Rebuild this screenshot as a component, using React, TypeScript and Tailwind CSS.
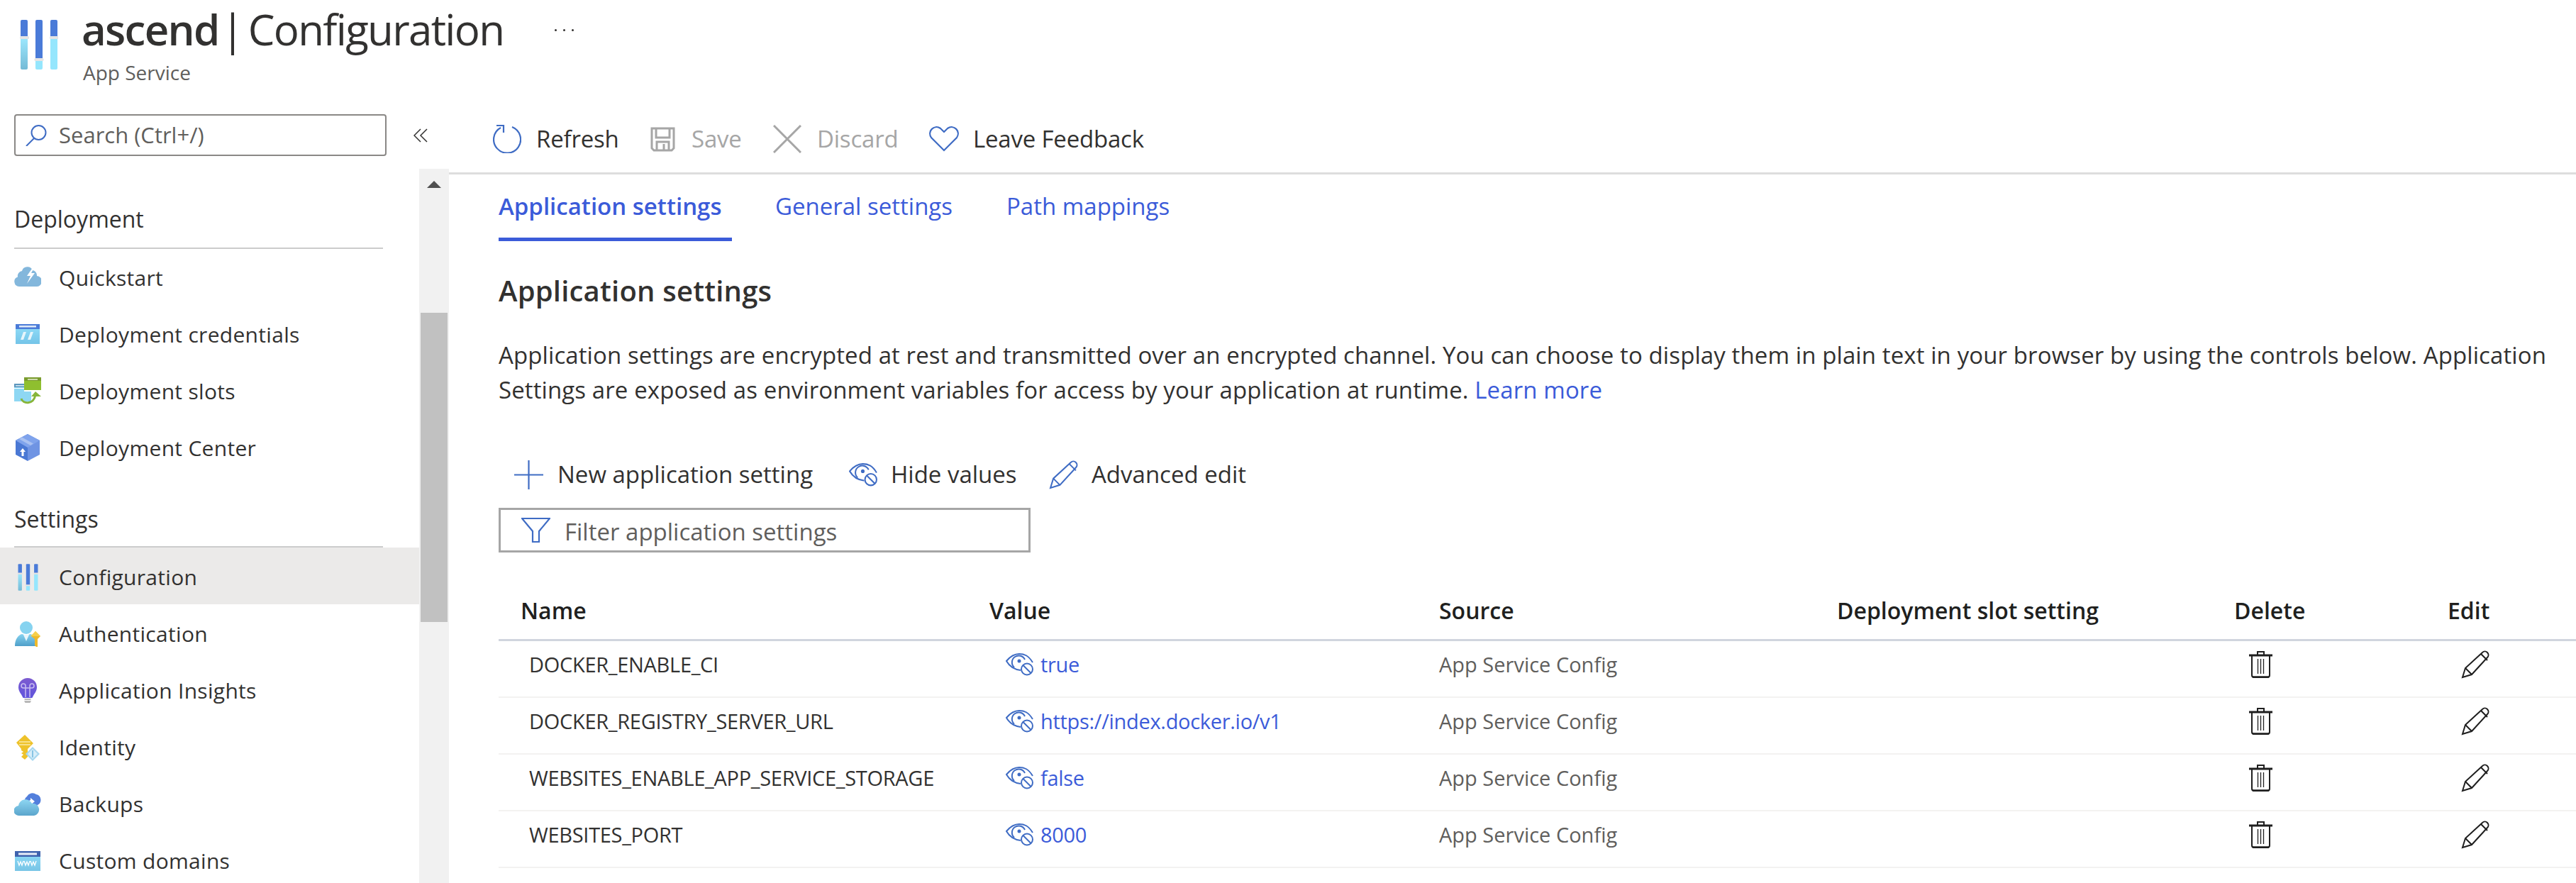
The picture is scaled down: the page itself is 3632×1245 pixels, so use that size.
import type { ReactNode } from 'react'

const ConfigIcon = ({ className }: { className: string }) => (
  <svg viewBox="0 0 54 70" className={className}>
    <defs>
      <linearGradient id="cfgLight" x1="0" y1="0" x2="0" y2="1">
        <stop offset="0" stopColor="#9be6fc" />
        <stop offset="1" stopColor="#74bad6" />
      </linearGradient>
    </defs>
    <path d="M1 2a2 2 0 0 1 2-2h6a2 2 0 0 1 2 2v24H1z" fill="#4a7bd8" />
    <path d="M1 27h10v41a2 2 0 0 1-2 2H3a2 2 0 0 1-2-2z" fill="url(#cfgLight)" />
    <path d="M22 2a2 2 0 0 1 2-2h6a2 2 0 0 1 2 2v56H22z" fill="#4a7bd8" />
    <path d="M22 58h10v10a2 2 0 0 1-2 2h-6a2 2 0 0 1-2-2z" fill="#95e6fd" />
    <path d="M43 2a2 2 0 0 1 2-2h6a2 2 0 0 1 2 2v24H43z" fill="#4a7bd8" />
    <path d="M43 27h10v41a2 2 0 0 1-2 2h-6a2 2 0 0 1-2-2z" fill="#95e6fd" />
    <rect x="0" y="23" width="13" height="4" rx="1.5" fill="#e4e4e4" />
    <rect x="20.5" y="54" width="13" height="4" rx="1.5" fill="#e4e4e4" />
    <rect x="42" y="23" width="13" height="4" rx="1.5" fill="#e4e4e4" />
  </svg>
)

const Quickstart = () => (
  <svg viewBox="0 0 38 38" className="w-[38px] h-[38px]">
    <path d="M7 32a7 7 0 0 1-2-13.600A7 7 0 0 1 11 10a8 8 0 0 1 15-1 8 8 0 0 1 6 8 7.500 7.500 0 0 1-1 15z" fill="#83b7dc" />
    <path d="M27 4l-9 13h5l-5 11 11-15h-5l5-9z" fill="#fff" />
  </svg>
)

const Credentials = () => (
  <svg viewBox="0 0 38 38" className="w-[38px] h-[38px]">
    <defs>
      <linearGradient id="credBody" x1="0" y1="0" x2="0" y2="1">
        <stop offset="0" stopColor="#93dffa" />
        <stop offset="1" stopColor="#74c4e8" />
      </linearGradient>
    </defs>
    <rect x="2" y="5" width="34" height="28" fill="url(#credBody)" />
    <rect x="2" y="5" width="34" height="7" fill="#4a7bd8" />
    <rect x="7" y="7" width="24" height="2.500" fill="#dfe9f7" />
    <path d="M13 16h4l-4 11H9zM23 16h4l-4 11h-4z" fill="#e6f5fb" />
  </svg>
)

const Slots = () => (
  <svg viewBox="0 0 38 38" className="w-[38px] h-[38px]">
    <rect x="0" y="9" width="24" height="25" fill="#8ed7f3" />
    <rect x="0" y="9" width="24" height="5" fill="#5b96bd" />
    <rect x="2" y="11" width="12" height="1.500" fill="#d4e7f2" />
    <rect x="14" y="0" width="24" height="18" fill="#8fbf2f" />
    <rect x="14" y="0" width="24" height="5" fill="#7a9c2e" />
    <rect x="19" y="2" width="14" height="2" fill="#cfdcae" />
    <rect x="0" y="15" width="14" height="1" fill="#fff" />
    <path d="M10 30c2 8 17 9 20-5" fill="none" stroke="#86b53a" strokeWidth="3" />
    <path d="M24 27l6-7 8 7z" fill="#86b53a" />
    <rect x="14" y="18" width="24" height="2" fill="#fff" />
  </svg>
)

const Cube = () => (
  <svg viewBox="0 0 38 38" className="w-[38px] h-[38px]">
    <path d="M19 0L36 9v20L19 38z" fill="#6f94e3" />
    <path d="M19 0L2 9v20l17 9z" fill="#4a78d4" />
    <path d="M19 0l17 9-17 10L2 9z" fill="#7fa3ec" />
    <path d="M11 4.500l16 9-4 2.500-16-9z" fill="#a9c1f1" />
    <path d="M12 20l-4 5h2.500v6h3v-6H16z" fill="#fff" />
  </svg>
)

const Auth = () => (
  <svg viewBox="0 0 38 38" className="w-[38px] h-[38px]">
    <defs>
      <linearGradient id="authBody" x1="0" y1="0" x2="0" y2="1">
        <stop offset="0" stopColor="#86d3f0" />
        <stop offset="1" stopColor="#4f9fc9" />
      </linearGradient>
    </defs>
    <circle cx="17" cy="10" r="9" fill="#86d3f0" />
    <path d="M1 36c0-10 5-16 10-17l6 2 6-2c3 1 6 4 7 8v9z" fill="url(#authBody)" />
    <path d="M13 20h8l-4 9z" fill="#eaf6fb" />
    <path d="M30 15l7 7-4 4v11h-2l-2-2v-9l-5-4z" fill="#efb92a" />
    <path d="M30 15l7 7-14 0z" fill="#f7cf4a" />
  </svg>
)

const Insights = () => (
  <svg viewBox="0 0 38 38" className="w-[38px] h-[38px]">
    <defs>
      <linearGradient id="bulb" x1="0" y1="0" x2="0" y2="1">
        <stop offset="0" stopColor="#7d5bd0" />
        <stop offset="1" stopColor="#5f54dc" />
      </linearGradient>
    </defs>
    <path d="M19 1a13 13 0 0 1 13 13c0 6-4 9-6 14-.400 1-1 1-2 1H14c-1 0-1.600 0-2-1-2-5-6-8-6-14A13 13 0 0 1 19 1z" fill="url(#bulb)" />
    <path d="M16 28V12a3 3 0 1 0-3 3h12a3 3 0 1 0-3-3v16" fill="none" stroke="#c9bdf0" strokeWidth="1.500" />
    <path d="M14 30h10l-1 2H15zM14 33h10l-1.500 3h-7z" fill="#b8b8b8" />
  </svg>
)

const Identity = () => (
  <svg viewBox="0 0 38 38" className="w-[38px] h-[38px]">
    <path d="M15 1l12 12-8 8v11l-4 4-5-4 3-3-3-2 3-2-3-2v-2l-7-9z" fill="#eec22a" />
    <path d="M7 10h16v2H7zM7 14h16v2H7z" fill="#f7e089" />
    <path d="M26 18l10 10-10 10-10-10z" fill="#a7d7ef" />
    <path d="M26 21l7 7-7 7-7-7z" fill="#d8eef9" />
    <path d="M26 23v10" stroke="#6cb6dd" strokeWidth="1.500" />
  </svg>
)

const Backups = () => (
  <svg viewBox="0 0 38 38" className="w-[38px] h-[38px]">
    <defs>
      <linearGradient id="backFront" x1="0" y1="0" x2="0" y2="1">
        <stop offset="0" stopColor="#8ed6f2" />
        <stop offset="1" stopColor="#5ba5cc" />
      </linearGradient>
    </defs>
    <path d="M16 18a7 7 0 0 1 2-10 9 9 0 0 1 13-3 8 8 0 0 1 2 15 4 4 0 0 1-3 2H18z" fill="#527fdc" />
    <path d="M17 16l6-3v-3l6 5-6 5v-3l-4 1z" fill="#fff" />
    <path d="M7 35a7 7 0 0 1-1-14 10 10 0 0 1 19-3 8.500 8.500 0 0 1 3 17z" fill="url(#backFront)" />
  </svg>
)

const Domains = () => (
  <svg viewBox="0 0 38 38" className="w-[38px] h-[38px]">
    <defs>
      <linearGradient id="wwwBody" x1="0" y1="0" x2="0" y2="1">
        <stop offset="0" stopColor="#8edcf8" />
        <stop offset="1" stopColor="#78c5e6" />
      </linearGradient>
    </defs>
    <rect x="1" y="5" width="36" height="28" fill="url(#wwwBody)" />
    <rect x="1" y="5" width="36" height="8" fill="#3f63ae" />
    <rect x="6" y="7.500" width="26" height="3" fill="#e8eef8" />
    <path d="M5 19l2 6 2-5 2 5 2-6M14 19l2 6 2-5 2 5 2-6M23 19l2 6 2-5 2 5 2-6" fill="none" stroke="#fff" strokeWidth="1.300" />
  </svg>
)

const EyeOff = ({ className }: { className: string }) => (
  <svg viewBox="0 0 40 32" fill="none" stroke="#3f6cc4" strokeWidth="2" className={className}>
    <path d="M38 13C32 3 26 1 19 1 12 1 6 5 1 11c4 7 11 12 20 13" />
    <path d="M12 20a9.500 9.500 0 1 1 15-11" />
    <circle cx="19" cy="11" r="2.500" fill="#3f6cc4" stroke="none" />
    <circle cx="30" cy="22.500" r="8" />
    <path d="M24.500 17l11 11" />
  </svg>
)

const Pencil = ({ color, className }: { color: string; className: string }) => (
  <svg viewBox="0 0 40 40" fill="none" stroke={color} strokeWidth="2" className={className}>
    <path d="M2 38l4-13L30 3c2-2 5-2 7 0s2 5 0 7L15 34z" />
    <path d="M6 25l9 9M28 5l9 9" />
  </svg>
)

const Trash = () => (
  <svg viewBox="0 0 33 38" fill="none" stroke="#1f1f1f" className="w-[33px] h-[38px]">
    <path d="M12 5V1h9v4" strokeWidth="2" />
    <path d="M0 6h33" strokeWidth="3" />
    <path d="M4 6v28c0 2 1 3 3 3h19c2 0 3-1 3-3V6" strokeWidth="2" />
    <path d="M5 36.500h23" strokeWidth="2.500" />
    <path d="M12.500 11v21M16.500 11v21M20.500 11v21" strokeWidth="1.300" />
  </svg>
)

type MenuItem = { label: string; icon: ReactNode; active?: boolean }

const deployment: MenuItem[] = [
  { label: 'Quickstart', icon: <Quickstart /> },
  { label: 'Deployment credentials', icon: <Credentials /> },
  { label: 'Deployment slots', icon: <Slots /> },
  { label: 'Deployment Center', icon: <Cube /> },
]

const settings: MenuItem[] = [
  { label: 'Configuration', icon: <ConfigIcon className="w-[29px] h-[38px]" />, active: true },
  { label: 'Authentication', icon: <Auth /> },
  { label: 'Application Insights', icon: <Insights /> },
  { label: 'Identity', icon: <Identity /> },
  { label: 'Backups', icon: <Backups /> },
  { label: 'Custom domains', icon: <Domains /> },
]

const rows = [
  { name: 'DOCKER_ENABLE_CI', value: 'true' },
  { name: 'DOCKER_REGISTRY_SERVER_URL', value: 'https://index.docker.io/v1' },
  { name: 'WEBSITES_ENABLE_APP_SERVICE_STORAGE', value: 'false' },
  { name: 'WEBSITES_PORT', value: '8000' },
]

function MenuRow({ item, className = '' }: { item: MenuItem; className?: string }) {
  return (
    <div className={`h-[80px] flex items-center shrink-0 ${className} ${item.active ? 'bg-[#ebeae9]' : ''}`}>
      <div className="w-[83px] pl-[20px] shrink-0 flex">
        <div className="w-[38px] flex justify-center">{item.icon}</div>
      </div>
      <span className="text-[30px] tracking-[0.3px] text-[#323130]">{item.label}</span>
    </div>
  )
}

function MenuHeading({ label, pad }: { label: string; pad: string }) {
  return (
    <div className="h-[101px] shrink-0 flex flex-col justify-end">
      <div className={`mx-[20px] w-[520px] border-b-2 border-[#cccccc] ${pad} text-[32px] leading-[40px] font-medium text-[#323130]`}>
        {label}
      </div>
    </div>
  )
}

function ToolButton({ icon, label, muted, className }: { icon: ReactNode; label: string; muted?: boolean; className: string }) {
  return (
    <div className={`flex items-center ${className}`}>
      {icon}
      <span className={`text-[33px] tracking-[-0.2px] ${muted ? 'text-[#a6a6a6]' : 'text-[#323130]'}`}>{label}</span>
    </div>
  )
}

export default function App() {
  return (
    <div className="w-full h-[1245px] overflow-hidden bg-white font-['Open_Sans','Segoe_UI',sans-serif] flex flex-col">
      {/* header */}
      <div className="h-[161px] shrink-0 flex items-start pl-[28px] pt-[28px]">
        <ConfigIcon className="w-[54px] h-[70px] shrink-0" />
        <div className="ml-[35px] -mt-[28px]">
          <div className="-ml-[2px] text-[60px] leading-[82px] tracking-[-1.7px] text-[#323130] whitespace-nowrap">
            <span className="font-semibold">ascend</span> <span className="-ml-[11px] -mr-[7px]">|</span> Configuration
          </div>
          <div className="mt-[2px] text-[28px] leading-[36px] text-[#605e5c]">App Service</div>
        </div>
        <div className="ml-[72px] mt-[13px] flex gap-[9px]">
          <div className="w-[3px] h-[3px] bg-[#323130] rounded-full" />
          <div className="w-[3px] h-[3px] bg-[#323130] rounded-full" />
          <div className="w-[3px] h-[3px] bg-[#323130] rounded-full" />
        </div>
      </div>

      <div className="flex-1 min-h-0 flex">
        {/* left blade menu */}
        <div className="w-[633px] shrink-0 flex flex-col">
          <div className="h-[77px] shrink-0 flex items-start pl-[20px]">
            <div className="w-[525px] h-[59px] border-2 border-[#8a8886] rounded-[4px] flex items-center pl-[14px]">
              <svg viewBox="0 0 30 30" fill="none" stroke="#3f6cc4" strokeWidth="2" className="w-[30px] h-[30px] shrink-0">
                <circle cx="18.500" cy="11" r="10" />
                <path d="M12 19L1 30" />
              </svg>
              <span className="ml-[17px] text-[31px] text-[#605e5c]">Search (Ctrl+/)</span>
            </div>
            <svg viewBox="0 0 20 20" fill="none" stroke="#323130" strokeWidth="1.500" className="w-[20px] h-[20px] ml-[38px] mt-[20px]">
              <path d="M10 1L1 10l9 9M19 1l-9 9 9 9" />
            </svg>
          </div>
          <div className="flex-1 min-h-0 flex">
            <div className="w-[591px] shrink-0 pt-[12px] flex flex-col overflow-hidden">
              <MenuHeading label="Deployment" pad="pb-[20px]" />
              {deployment.map(item => <MenuRow key={item.label} item={item} />)}
              <MenuHeading label="Settings" pad="pb-[18px]" />
              {settings.map(item => <MenuRow key={item.label} item={item} className="pt-[3px]" />)}
            </div>
            <div className="w-[42px] shrink-0 bg-[#f1f1f1] flex flex-col items-center">
              <svg viewBox="0 0 20 10" className="w-[20px] h-[10px] mt-[17px] shrink-0">
                <path d="M10 0l10 10H0z" fill="#505050" />
              </svg>
              <div className="w-[38px] h-[436px] mt-[176px] bg-[#c1c1c1] shrink-0" />
            </div>
          </div>
        </div>

        {/* main */}
        <div className="flex-1 min-w-0 flex flex-col">
          <div className="h-[85px] shrink-0 border-b-[3px] border-[#dddddd] flex items-center pl-[62px] pb-[12px]">
            <ToolButton
              className="w-[222px]"
              label="Refresh"
              icon={
                <svg viewBox="0 0 40 40" fill="none" stroke="#3f6cc4" strokeWidth="2.200" className="w-[40px] h-[40px] mr-[21px]">
                  <path d="M27 3a19 19 0 1 1-16 1" />
                  <path d="M5 1h10v10" />
                </svg>
              }
            />
            <ToolButton
              className="w-[173px]"
              label="Save"
              muted
              icon={
                <svg viewBox="0 0 35 35" fill="none" stroke="#a6a6a6" strokeWidth="3" className="w-[35px] h-[35px] mr-[23px]">
                  <path d="M2 2h31v28l-3 3H5l-3-3z" />
                  <path d="M8 2v13h19V2M9 33V21h17v12M19 24v9" />
                </svg>
              }
            />
            <ToolButton
              className="w-[220px]"
              label="Discard"
              muted
              icon={
                <svg viewBox="0 0 40 40" fill="none" stroke="#a6a6a6" strokeWidth="3" className="w-[40px] h-[40px] mr-[22px]">
                  <path d="M1 1l38 38M39 1L1 39" />
                </svg>
              }
            />
            <ToolButton
              className="w-[310px]"
              label="Leave Feedback"
              icon={
                <svg viewBox="0 0 42 36" fill="none" stroke="#3f6cc4" strokeWidth="2.200" className="w-[42px] h-[36px] mr-[20px]">
                  <path d="M21 34L3 16C-3 7 7-3 16 3l5 5 5-5c9-6 19 4 13 13z" />
                </svg>
              }
            />
          </div>

          <div className="flex-1 min-h-0 pl-[70px]">
            {/* tabs */}
            <div className="h-[94px] flex items-stretch text-[33px] text-[#3b5bd9]">
              <div className="w-[329px] pt-[24px] border-b-[5px] border-[#3b5bd9] font-semibold leading-[42px] whitespace-nowrap">Application settings</div>
              <div className="ml-[61px] w-[248px] pt-[24px] leading-[42px] whitespace-nowrap">General settings</div>
              <div className="ml-[78px] pt-[24px] leading-[42px]">Path mappings</div>
            </div>

            <h2 className="mt-[46px] text-[40px] leading-[48px] tracking-[0.2px] font-semibold text-[#323130]">Application settings</h2>
            <p className="mt-[42px] text-[33px] leading-[49px] tracking-[0.1px] text-[#323130] pr-[40px]">
              Application settings are encrypted at rest and transmitted over an encrypted channel. You can choose to display them in plain text in your browser by using the controls below. Application Settings are exposed as environment variables for access by your application at runtime.{' '}
              <span className="text-[#3b5bd9]">Learn more</span>
            </p>

            {/* commands */}
            <div className="mt-[73px] h-[44px] flex items-center text-[33px] text-[#323130]">
              <svg viewBox="0 0 41 41" stroke="#3f6cc4" strokeWidth="2.200" className="w-[41px] h-[41px] ml-[22px] mr-[20px] shrink-0">
                <path d="M20.500 0v41M0 20.500h41" />
              </svg>
              <span className="w-[411px] shrink-0">New application setting</span>
              <EyeOff className="w-[41px] h-[33px] mr-[18px] shrink-0" />
              <span className="w-[223px] shrink-0">Hide values</span>
              <Pencil color="#3f6cc4" className="w-[41px] h-[41px] mr-[19px] shrink-0" />
              <span>Advanced edit</span>
            </div>

            <div className="mt-[25px] w-[750px] h-[63px] border-[3px] border-[#a6a6a6] flex items-center pl-[29px]">
              <svg viewBox="0 0 41 36" fill="none" stroke="#3f6cc4" strokeWidth="2.200" className="w-[41px] h-[36px] shrink-0">
                <path d="M1 1h39L25 19v15h-9V19z" />
              </svg>
              <span className="ml-[20px] pt-[5px] text-[33px] text-[#605e5c]">Filter application settings</span>
            </div>

            {/* table */}
            <div className="mt-[62px] h-[63px] border-b-[3px] border-[#d0d5de] grid grid-cols-[692px_634px_561px_560px_301px_1fr] items-start text-[32px] leading-[40px] font-semibold text-[#201f1e]">
              <div className="pl-[31px]">Name</div>
              <div>Value</div>
              <div>Source</div>
              <div>Deployment slot setting</div>
              <div>Delete</div>
              <div>Edit</div>
            </div>
            {rows.map(row => (
              <div key={row.name} className="h-[80px] pb-[12px] border-b-2 border-[#f3f2f1] grid grid-cols-[692px_634px_561px_560px_301px_1fr] items-center text-[29px] tracking-[-0.3px]">
                <div className="pl-[43px] text-[#323130] whitespace-nowrap">{row.name}</div>
                <div className="pl-[23px] flex items-center text-[#3b5bd9]">
                  <EyeOff className="w-[40px] h-[32px] mr-[9px] shrink-0" />
                  {row.value}
                </div>
                <div className="text-[#605e5c] tracking-normal">App Service Config</div>
                <div />
                <div className="pl-[21px] flex"><Trash /></div>
                <div className="pl-[19px] flex"><Pencil color="#1f1f1f" className="w-[40px] h-[40px]" /></div>
              </div>
            ))}
          </div>
        </div>
      </div>
    </div>
  )
}
